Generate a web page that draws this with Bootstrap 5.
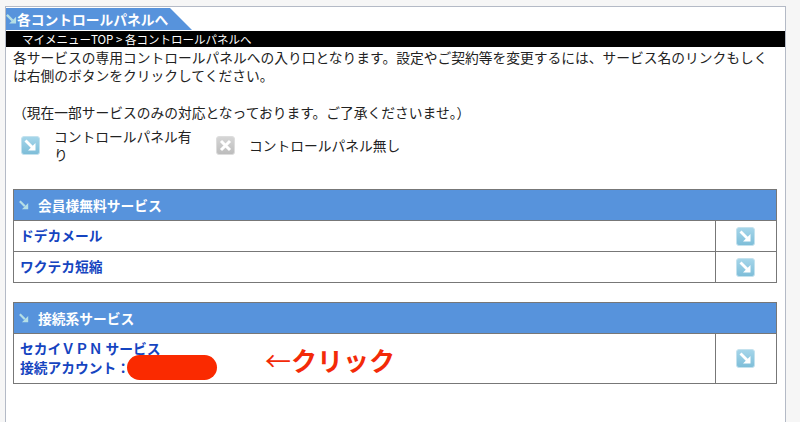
<!DOCTYPE html>
<html lang="ja">
<head>
    <meta charset="UTF-8">
    <meta name="viewport" content="width=device-width, initial-scale=1.0">
    <title>各コントロールパネルへ</title>
    <link href="https://cdn.jsdelivr.net/npm/bootstrap@5.3.0/dist/css/bootstrap.min.css" rel="stylesheet">
    <style>
        html, body { height: 422px; overflow: hidden; }
        body { background: #f6f6f6; font-family: "Noto Sans CJK JP", "Liberation Sans", sans-serif; font-size: 13.75px; color: #222; padding: 6px 14px 0 5px; line-height: 18px; }
        .page-box { background: #fff; border: 1px solid #b4bac6; border-bottom: 0; height: 416px; padding-top: 1px; }
        .title-tab { width: 186px; height: 22px; background: #5793dc; color: #fff; font-weight: 700; font-size: 13.75px; line-height: 22px; clip-path: polygon(0 0, 164px 0, 100% 100%, 0 100%); }
        .crumb-bar { background: #000; color: #fff; height: 16px; margin-top: 1px; font-size: 11.5px; line-height: 16px; padding-left: 16px; }
        .intro { padding: 1px 7px 0 7px; }
        .intro p { margin: 0; }
        .intro .note-line { margin-top: 19px; }
        .legend-row { margin-top: 6px; }
        .legend-on { width: 210px; padding-left: 15px; }
        .legend-on span { width: 146px; margin-left: 14px; }
        .legend-off span { margin-left: 14px; }
        .svc-table { width: 764px; margin: 0 0 0 7px; border-collapse: collapse; border: 1px solid #777; table-layout: fixed; }
        .svc-table td, .svc-table th { border: 1px solid #777; padding: 0 6px; }
        .svc-table th { background: #5793dc; color: #fff; height: 31px; font-weight: 700; padding: 0 0 1px 5px; }
        .svc-table td { height: 31px; font-weight: 700; padding-bottom: 2px; }
        .svc-table td a { color: #1544c0; text-decoration: none; }
        .svc-table .go-cell { text-align: center; padding: 0; }
        .svc-table .tall td { height: 50px; line-height: 19px; }
        .go-col { width: 61px; }
        .head-arrow { margin: 0 9px 0 0; }
        .block-one { margin-top: 26px; }
        .block-two { margin-top: 19px; position: relative; }
        .redact { position: absolute; left: 121px; top: 53px; width: 90px; height: 25px; border-radius: 13px; background: #fa2a00; }
        .click-note { position: absolute; left: 259px; top: 41px; color: #f32a08; font-size: 26px; line-height: 34px; font-weight: 700; }
        .click-note i { font-style: normal; font-weight: 400; }
        svg { display: block; }
    </style>
</head>
<body>
    <svg width="0" height="0" class="position-absolute">
        <defs>
            <linearGradient id="blueFill" x1="0" y1="0" x2="0" y2="1">
                <stop offset="0" stop-color="#a6d6ea"/>
                <stop offset="1" stop-color="#7dbdd8"/>
            </linearGradient>
            <linearGradient id="grayFill" x1="0" y1="0" x2="0" y2="1">
                <stop offset="0" stop-color="#d6d6d6"/>
                <stop offset="1" stop-color="#bcbcbc"/>
            </linearGradient>
            <symbol id="goIcon" viewBox="0 0 19 19">
                <rect x="0.5" y="0.5" width="18" height="18" rx="2.5" fill="url(#blueFill)" stroke="#c4e2ee"/>
                <path d="M4.5 4.5 L11.5 11.5" fill="none" stroke="#fff" stroke-width="2.8"/>
                <path d="M14.5 7 V14.5 H7 Z" fill="#fff"/>
            </symbol>
            <symbol id="noIcon" viewBox="0 0 19 19">
                <rect x="0.5" y="0.5" width="18" height="18" rx="2.5" fill="url(#grayFill)" stroke="#ddd"/>
                <path d="M5 5 L14 14 M14 5 L5 14" fill="none" stroke="#fff" stroke-width="3"/>
            </symbol>
            <symbol id="headArrow" viewBox="0 0 12 12">
                <path d="M1 1.5 L7 7.5" fill="none" stroke="#b5dfe6" stroke-width="2.6"/>
                <path d="M11 3.5 V11 H3.5 Z" fill="#b5dfe6"/>
            </symbol>
        </defs>
    </svg>

    <div class="page-box">
        <div class="title-tab d-flex align-items-center">
            <svg width="11" height="12"><use href="#headArrow"/></svg>
            <span>各コントロールパネルへ</span>
        </div>
        <div class="crumb-bar">マイメニューTOP &gt; 各コントロールパネルへ</div>

        <div class="intro">
            <p>各サービスの専用コントロールパネルへの入り口となります。設定やご契約等を変更するには、サービス名のリンクもしくは右側のボタンをクリックしてください。</p>
            <p class="note-line">（現在一部サービスのみの対応となっております。ご了承くださいませ。）</p>
        </div>

        <div class="legend-row d-flex align-items-center">
            <div class="legend-on d-flex align-items-center">
                <svg width="19" height="19"><use href="#goIcon"/></svg>
                <span>コントロールパネル有り</span>
            </div>
            <div class="legend-off d-flex align-items-center">
                <svg width="19" height="19"><use href="#noIcon"/></svg>
                <span>コントロールパネル無し</span>
            </div>
        </div>

        <div class="block-one">
            <table class="svc-table">
                <colgroup><col><col class="go-col"></colgroup>
                <tr><th colspan="2"><div class="d-flex align-items-center"><svg class="head-arrow" width="10" height="10"><use href="#headArrow"/></svg>会員様無料サービス</div></th></tr>
                <tr><td><a href="#">ドデカメール</a></td><td class="go-cell"><svg class="mx-auto" width="19" height="19"><use href="#goIcon"/></svg></td></tr>
                <tr><td><a href="#">ワクテカ短縮</a></td><td class="go-cell"><svg class="mx-auto" width="19" height="19"><use href="#goIcon"/></svg></td></tr>
            </table>
        </div>

        <div class="block-two">
            <table class="svc-table">
                <colgroup><col><col class="go-col"></colgroup>
                <tr><th colspan="2"><div class="d-flex align-items-center"><svg class="head-arrow" width="10" height="10"><use href="#headArrow"/></svg>接続系サービス</div></th></tr>
                <tr class="tall"><td><a href="#">セカイＶＰＮ サービス<br>接続アカウント：</a></td><td class="go-cell"><svg class="mx-auto" width="19" height="19"><use href="#goIcon"/></svg></td></tr>
            </table>
            <div class="redact"></div>
            <div class="click-note"><i>←</i>クリック</div>
        </div>
    </div>

    <script src="https://cdn.jsdelivr.net/npm/bootstrap@5.3.0/dist/js/bootstrap.bundle.min.js"></script>
</body>
</html>
